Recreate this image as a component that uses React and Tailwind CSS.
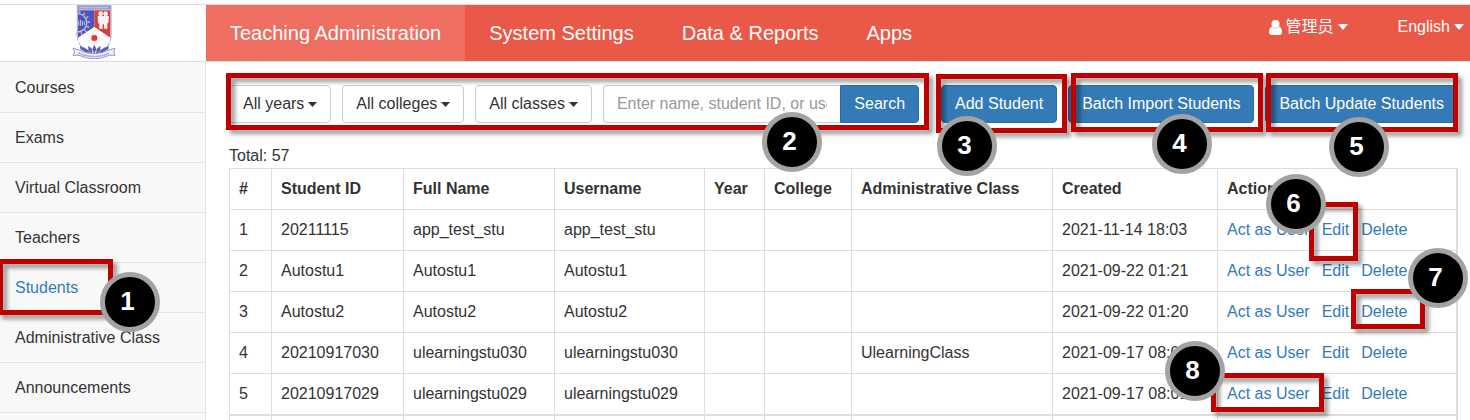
import React from "react";

const NAV = ["Teaching Administration", "System Settings", "Data & Reports", "Apps"];

const SIDE = [
  "Courses",
  "Exams",
  "Virtual Classroom",
  "Teachers",
  "Students",
  "Administrative Class",
  "Announcements",
];

const COLUMNS = [
  { name: "#", width: "w-[42px]" },
  { name: "Student ID", width: "w-[132px]" },
  { name: "Full Name", width: "w-[151px]" },
  { name: "Username", width: "w-[150px]" },
  { name: "Year", width: "w-[60px]" },
  { name: "College", width: "w-[87px]" },
  { name: "Administrative Class", width: "w-[201px]" },
  { name: "Created", width: "w-[165px]" },
  { name: "Action", width: "" },
];

const ROWS = [
  ["1", "20211115", "app_test_stu", "app_test_stu", "", "", "", "2021-11-14 18:03"],
  ["2", "Autostu1", "Autostu1", "Autostu1", "", "", "", "2021-09-22 01:21"],
  ["3", "Autostu2", "Autostu2", "Autostu2", "", "", "", "2021-09-22 01:20"],
  ["4", "20210917030", "ulearningstu030", "ulearningstu030", "", "", "UlearningClass", "2021-09-17 08:01"],
  ["5", "20210917029", "ulearningstu029", "ulearningstu029", "", "", "", "2021-09-17 08:01"],
];

const FRAMES = [
  "left-[-2px] top-[259px] w-[115px] h-[56px]",
  "left-[226px] top-[73px] w-[703px] h-[57px]",
  "left-[936px] top-[74px] w-[131px] h-[59px]",
  "left-[1071px] top-[73px] w-[192px] h-[59px]",
  "left-[1266px] top-[73px] w-[192px] h-[59px]",
  "left-[1309px] top-[202px] w-[49px] h-[59px]",
  "left-[1351px] top-[289px] w-[74px] h-[40px]",
  "left-[1211px] top-[373px] w-[113px] h-[39px]",
];

const BADGES = [
  "left-[100px] top-[272px]",
  "left-[762px] top-[112px]",
  "left-[937px] top-[116px]",
  "left-[1152px] top-[114px]",
  "left-[1329px] top-[117px]",
  "left-[1266px] top-[174px]",
  "left-[1408px] top-[248px]",
  "left-[1165px] top-[341px]",
];

function Caret({ size = "h-[5px] w-[9px]" }) {
  return (
    <svg className={`shrink-0 ${size}`} viewBox="0 0 9 5" preserveAspectRatio="none" fill="currentColor" aria-hidden="true">
      <path d="M0 0h9L4.500 5z" />
    </svg>
  );
}

function UserIcon() {
  return (
    <svg className="h-[15px] w-[13px] shrink-0" viewBox="0 0 13 15" fill="currentColor" aria-hidden="true">
      <circle cx="6.5" cy="4" r="4" />
      <path d="M3 6.500C1 7 0 9.200 0 12.200C0 14 1 15 2.500 15h8C12 15 13 14 13 12.200C13 9.200 12 7 10 6.500C9 7.800 7.900 8.300 6.500 8.300S4 7.800 3 6.500z" />
    </svg>
  );
}

function Crest() {
  const teeth = [-80, -55, -30, -5, 20, 45, 70, 95];
  return (
    <svg className="h-[54px] w-[44px]" viewBox="0 0 132 162" role="img" aria-label="University crest">
      <path d="M16 2H117V92C117 122 96 138 67 150C38 138 16 122 16 92Z" fill="#fff" stroke="#a3a5d4" strokeWidth="3" />
      <path d="M16 2H117V14H16Z" fill="#9a9cc9" />
      <path d="M23 8H110" stroke="#c9cae4" strokeWidth="4" strokeDasharray="5 2" />
      <path d="M18 16H67V66L18 98Z" fill="#5053b8" />
      <path d="M67 16H115V98L67 66Z" fill="#d8403e" />
      <path d="M17 26A27 27 0 0 1 17 81" fill="none" stroke="#c3c5ec" strokeWidth="4" />
      {teeth.map((angle) => (
        <path key={angle} d="M47 54h7" stroke="#b3b5e4" strokeWidth="5" transform={`rotate(${angle} 17 54)`} />
      ))}
      <path d="M19 62V49M25 63V44M31 62V47M37 60V50" stroke="#c8caee" strokeWidth="3" />
      <g fill="#fff4f1">
        <circle cx="86" cy="26" r="7" />
        <circle cx="101" cy="26" r="7" />
        <path d="M77 34Q86 29 93 34Q101 29 111 34L109 55H106V71H96V58H92V71H82V55H78Z" />
      </g>
      <path d="M67 67L114 99V112H18V99Z" fill="#fff" />
      <g stroke="#f8d5d1" strokeWidth="2">
        <path d="M67 78V120M46 99H88M52 84L82 114M82 84L52 114M59 80L75 118M75 80L59 118M48 91L86 107M86 91L48 107" />
      </g>
      <circle cx="67" cy="99" r="9" fill="#d63a3c" />
      <g fill="#5a5db2">
        <path d="M67 148L61 132L67 119L73 132Z" />
        <path d="M62 148L49 137L49 122L60 132Z" />
        <path d="M72 148L85 137L85 122L74 132Z" />
        <path d="M55 146L35 138L34 126L48 135Z" />
        <path d="M79 146L99 138L100 126L86 135Z" />
        <path d="M43 142L25 133L24 122L37 130Z" />
        <path d="M91 142L109 133L110 122L97 130Z" />
      </g>
      <path d="M3 130L18 134Q66 158 114 134L129 130L125 141L129 151L112 151Q66 172 21 151L3 151L8 141Z" fill="#f0f1fa" stroke="#9497ca" strokeWidth="3" />
      <path d="M20 144Q66 165 113 144" fill="none" stroke="#8f92c6" strokeWidth="5" strokeDasharray="4 2" />
    </svg>
  );
}

function Filter({ children }) {
  return (
    <button
      type="button"
      className="flex h-[38px] shrink-0 items-center gap-1 rounded border border-[#ccc] bg-white px-[13px] whitespace-nowrap"
    >
      {children}
      <Caret />
    </button>
  );
}

function Primary({ children }) {
  return (
    <button
      type="button"
      className="h-[38px] shrink-0 rounded border border-[#2e6da4] bg-[#337ab7] px-[13px] whitespace-nowrap text-white"
    >
      {children}
    </button>
  );
}

export default function App() {
  return (
    <div className="relative flex h-screen flex-col overflow-hidden bg-white pt-1 font-['Liberation_Sans','Noto_Sans_CJK_SC',sans-serif] text-[16px] leading-[24px] text-[#333]">
      <header className="flex h-[58px] shrink-0 border-y border-[#ddd]">
        <div className="flex w-[206px] shrink-0 justify-center pr-[18px]">
          <Crest />
        </div>
        <div className="flex min-w-0 grow justify-between bg-[#ea5948] text-white">
          <nav className="flex text-[20px]">
            {NAV.map((name, i) => (
              <a
                key={name}
                href="#"
                className={`flex items-center px-6 whitespace-nowrap ${i === 0 ? "bg-[#ee6e62]" : ""}`}
              >
                {name}
              </a>
            ))}
          </nav>
          <div className="flex items-start gap-[50px] pt-[10px] pr-[6px]">
            <button type="button" className="flex items-center gap-1">
              <UserIcon />
              管理员
              <Caret size="h-[6px] w-[10px]" />
            </button>
            <button type="button" className="flex items-center gap-1">
              English
              <Caret size="h-[6px] w-[10px]" />
            </button>
          </div>
        </div>
      </header>

      <div className="flex min-h-0 grow">
        <aside className="w-[206px] shrink-0 border-r border-[#e2e2e2] bg-[#f8f8f8] pt-px">
          <ul>
            {SIDE.map((name) => (
              <li key={name} className="border-b border-[#e4e4e4]">
                <a
                  href="#"
                  className={`flex h-[49px] items-center px-[15px] whitespace-nowrap ${name === "Students" ? "text-[#337ab7]" : ""}`}
                >
                  {name}
                </a>
              </li>
            ))}
          </ul>
        </aside>

        <main className="min-w-0 grow pt-[23px] pr-3 pl-[23px]">
          <div className="flex gap-[11px]">
            <Filter>All years</Filter>
            <Filter>All colleges</Filter>
            <Filter>All classes</Filter>
            <form className="flex min-w-0 grow pr-[11px]" onSubmit={(e) => e.preventDefault()}>
              <input
                type="text"
                aria-label="Search students"
                placeholder="Enter name, student ID, or username"
                className="h-[38px] w-0 min-w-0 grow rounded-l border border-r-0 border-[#ccc] px-[13px] placeholder:text-[#999]"
              />
              <button
                type="submit"
                className="h-[38px] rounded-r border border-[#2e6da4] bg-[#337ab7] px-[13px] text-white"
              >
                Search
              </button>
            </form>
            <Primary>Add Student</Primary>
            <Primary>Batch Import Students</Primary>
            <Primary>Batch Update Students</Primary>
          </div>

          <p className="mt-[21px]">Total: 57</p>

          <table className="w-full table-fixed border-collapse border-r-2 border-[#ddd] text-left">
            <thead>
              <tr className="h-[41px]">
                {COLUMNS.map((c) => (
                  <th key={c.name} className={`border border-[#ddd] px-[9px] py-0 font-bold whitespace-nowrap ${c.width}`}>
                    {c.name}
                  </th>
                ))}
              </tr>
            </thead>
            <tbody className="border-b-2 border-[#ddd]">
              {ROWS.map((row) => (
                <tr key={row[0]} className="h-[41px]">
                  {row.map((cell, i) => (
                    <td key={i} className="border border-[#ddd] px-[9px] py-0 whitespace-nowrap">
                      {cell}
                    </td>
                  ))}
                  <td className="border border-[#ddd] px-[9px] py-0">
                    <div className="flex gap-3 whitespace-nowrap text-[#337ab7]">
                      <a href="#">Act as User</a>
                      <a href="#">Edit</a>
                      <a href="#">Delete</a>
                    </div>
                  </td>
                </tr>
              ))}
            </tbody>
            <tfoot>
              <tr className="h-[41px]">
                {COLUMNS.map((c) => (
                  <td key={c.name} className="border border-[#ddd]" />
                ))}
              </tr>
            </tfoot>
          </table>
        </main>
      </div>

      <div className="pointer-events-none">
        {FRAMES.map((place) => (
          <div
            key={place}
            className={`absolute border-[5px] border-[#c00000] drop-shadow-[4px_4px_2px_rgba(0,0,0,0.4)] ${place}`}
          />
        ))}
        {BADGES.map((place, i) => (
          <div
            key={place}
            className={`absolute flex h-[60px] w-[60px] items-center justify-center rounded-full border-[5px] border-[#a3a3a3] bg-black pr-[5px] pb-[3px] text-[26px] font-bold text-white ${place}`}
          >
            {i + 1}
          </div>
        ))}
      </div>
    </div>
  );
}
